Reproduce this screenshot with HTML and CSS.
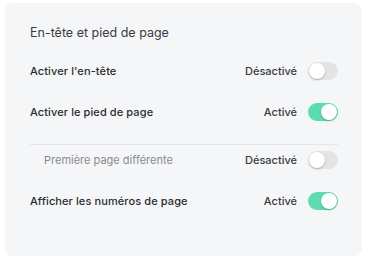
FILE: index.html
```html
<!DOCTYPE html>
<html lang="fr">
<head>
<meta charset="utf-8">
<link rel="stylesheet" href="styles.css">
</head>
<body>
<section class="card">
  <h2 class="title">En-tête et pied de page</h2>
  <div class="row">
    <span class="label">Activer l'en-tête</span>
    <div class="control"><span class="state">Désactivé</span><span class="toggle"></span></div>
  </div>
  <div class="row">
    <span class="label">Activer le pied de page</span>
    <div class="control"><span class="state">Activé</span><span class="toggle on"></span></div>
  </div>
  <div class="group">
    <div class="row sub">
      <span class="label">Première page différente</span>
      <div class="control"><span class="state">Désactivé</span><span class="toggle"></span></div>
    </div>
  </div>
  <div class="row">
    <span class="label">Afficher les numéros de page</span>
    <div class="control"><span class="state">Activé</span><span class="toggle on"></span></div>
  </div>
</section>
</body>
</html>
```
FILE: styles.css
```css
* { box-sizing: border-box; }
html, body { margin: 0; background: #ffffff; }
body {
  padding: 3px 4px 5px 5px;
  font-family: Inter, "Noto Sans", sans-serif;
  color: #2f3033;
}
.card {
  width: 357px;
  height: 253px;
  background: #f5f6f8;
  border-radius: 8px;
  padding: 20px 24px 0 25px;
  display: flex;
  flex-direction: column;
  gap: 11px;
}
.title {
  margin: 0 0 2px;
  font-size: 12.5px;
  line-height: 20px;
  font-weight: 400;
  color: #3a3b3e;
}
.row {
  height: 30px;
  display: flex;
  align-items: center;
  justify-content: space-between;
}
.label {
  font-size: 11px;
  font-weight: 500;
  letter-spacing: 0.1px;
  color: #2b2c2f;
}
.control {
  display: flex;
  align-items: center;
  gap: 11px;
}
.state {
  font-size: 11px;
  font-weight: 500;
  color: #3a3b3e;
}
.group {
  margin-top: 6px;
  border-top: 1px solid #e4e5e8;
}
.sub { padding-left: 14px; }
.sub .label { font-weight: 400; color: #8a8b8f; letter-spacing: 0; }
.toggle {
  width: 30px;
  height: 18px;
  border-radius: 9px;
  background: #e3e4e6;
  position: relative;
}
.toggle::after {
  content: "";
  position: absolute;
  top: 1px;
  left: 1px;
  width: 16px;
  height: 16px;
  border-radius: 50%;
  background: #ffffff;
  box-shadow: 0 1px 2px rgba(0,0,0,0.25);
}
.toggle.on { background: #5cdcb0; }
.toggle.on::after { left: 13px; }
```
